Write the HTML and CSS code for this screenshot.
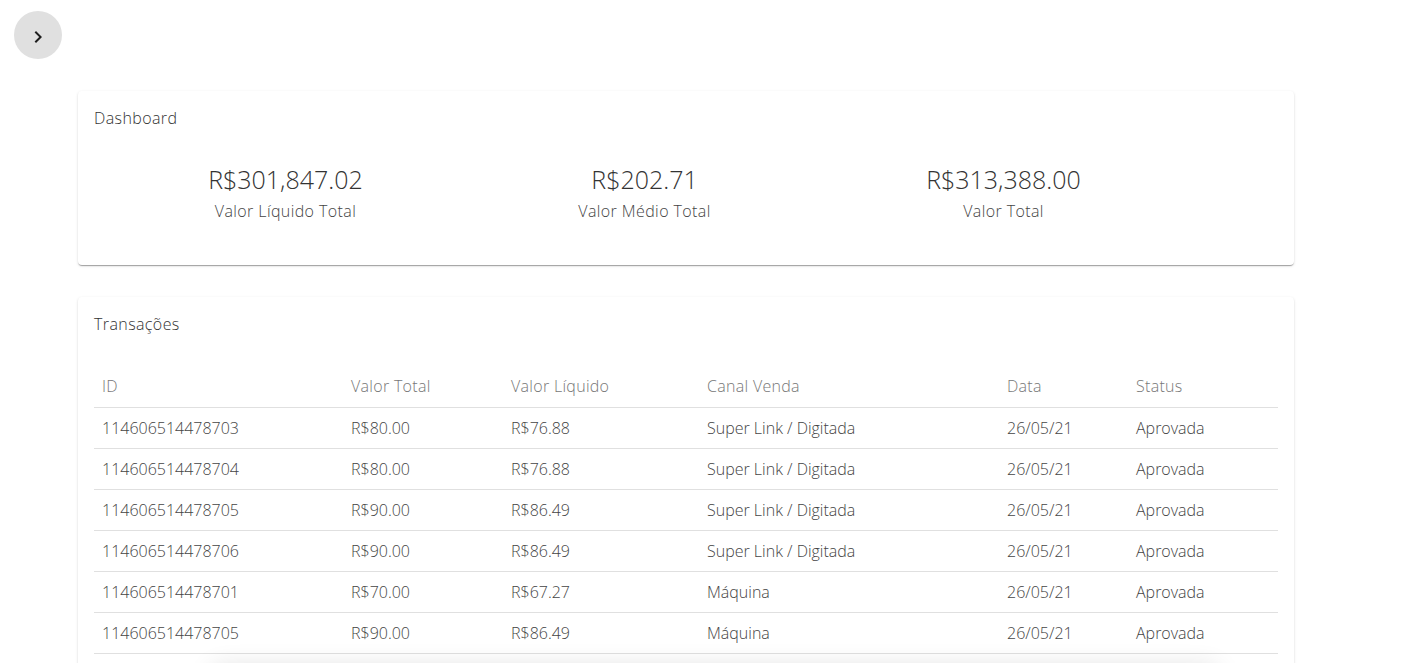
FILE: index.html
```html
<!DOCTYPE html>
<html lang="pt-BR">
<head>
<meta charset="utf-8">
<title>Dashboard</title>
<link rel="stylesheet" href="styles.css">
</head>
<body>
<div class="topbar">
  <button class="toggle" aria-label="Abrir menu">
    <svg viewBox="0 0 24 24" width="24" height="24"><path d="M10 6L8.59 7.41 13.17 12l-4.58 4.59L10 18l6-6z" fill="#1e1e1e"/></svg>
  </button>
</div>
<main class="content">
  <section class="card dash">
    <h2 class="card-title">Dashboard</h2>
    <div class="stats">
      <div class="stat"><div class="stat-value">R$301,847.02</div><div class="stat-label">Valor Líquido Total</div></div>
      <div class="stat"><div class="stat-value">R$202.71</div><div class="stat-label">Valor Médio Total</div></div>
      <div class="stat"><div class="stat-value">R$313,388.00</div><div class="stat-label">Valor Total</div></div>
    </div>
  </section>
  <section class="card trans">
    <h2 class="card-title">Transações</h2>
    <table class="table">
      <colgroup>
        <col class="c-id"><col class="c-vt"><col class="c-vl"><col class="c-canal"><col class="c-data"><col class="c-status">
      </colgroup>
      <thead>
        <tr><th>ID</th><th>Valor Total</th><th>Valor Líquido</th><th>Canal Venda</th><th>Data</th><th>Status</th></tr>
      </thead>
      <tbody>
        <tr><td>114606514478703</td><td>R$80.00</td><td>R$76.88</td><td>Super Link / Digitada</td><td>26/05/21</td><td>Aprovada</td></tr>
        <tr><td>114606514478704</td><td>R$80.00</td><td>R$76.88</td><td>Super Link / Digitada</td><td>26/05/21</td><td>Aprovada</td></tr>
        <tr><td>114606514478705</td><td>R$90.00</td><td>R$86.49</td><td>Super Link / Digitada</td><td>26/05/21</td><td>Aprovada</td></tr>
        <tr><td>114606514478706</td><td>R$90.00</td><td>R$86.49</td><td>Super Link / Digitada</td><td>26/05/21</td><td>Aprovada</td></tr>
        <tr><td>114606514478701</td><td>R$70.00</td><td>R$67.27</td><td>Máquina</td><td>26/05/21</td><td>Aprovada</td></tr>
        <tr><td>114606514478705</td><td>R$90.00</td><td>R$86.49</td><td>Máquina</td><td>26/05/21</td><td>Aprovada</td></tr>
      </tbody>
    </table>
  </section>
</main>
<div class="floating"></div>
</body>
</html>
```
FILE: styles.css
```css
* { box-sizing: border-box; }
html, body { margin: 0; padding: 0; background: #fff; }
body {
  font-family: "Open Sans", "Liberation Sans", sans-serif;
  font-weight: 300;
  color: #333;
  overflow: hidden;
}
.topbar { padding: 11px 0 0 14px; height: 91px; }
.toggle {
  width: 48px; height: 48px; border-radius: 50%;
  border: 0; background: #e0e0e0; padding: 4px 0 0 0;
  display: flex; align-items: center; justify-content: center;
}
.toggle svg { display: block; }
.content { margin-left: 78px; width: 1216px; display: flex; flex-direction: column; gap: 32px; }
.card {
  background: #fff; border-radius: 4px;
  box-shadow: 0 2px 1px -1px rgba(0,0,0,.2), 0 1px 1px 0 rgba(0,0,0,.14), 0 1px 3px 0 rgba(0,0,0,.12);
  padding: 16px;
}
.card-title { margin: 0; font-size: 16px; font-weight: 300; line-height: 22px; color: #333; letter-spacing: 0.4px; }
.dash { height: 174px; }
.stats { display: grid; grid-template-columns: repeat(3, 359px); padding-left: 12px; margin-top: 33px; }
.stat { text-align: center; }
.stat-value { font-size: 25px; line-height: 34px; color: #333; }
.stat-label { font-size: 16px; line-height: 22px; color: #444; margin-top: 4px; letter-spacing: 0.4px; }
.trans { padding-bottom: 40px; }
.table { width: 100%; border-collapse: collapse; margin-top: 31px; font-size: 16px; }
.c-id { width: 249px; } .c-vt { width: 160px; } .c-vl { width: 196px; }
.c-canal { width: 300px; } .c-data { width: 129px; } .c-status { width: 150px; }
.table th, .table td {
  text-align: left; padding: 0 8px; height: 41px;
  border-bottom: 1px solid #e0e0e0; font-weight: 300; white-space: nowrap;
}
.table th { color: #777; letter-spacing: 0.3px; }
.table td { color: #444; }
.floating {
  position: fixed; left: 215px; top: 672px; width: 1000px; height: 60px;
  background: #fff; border-radius: 8px;
  box-shadow: 0 0 24px 6px rgba(0,0,0,.12);
}
```
